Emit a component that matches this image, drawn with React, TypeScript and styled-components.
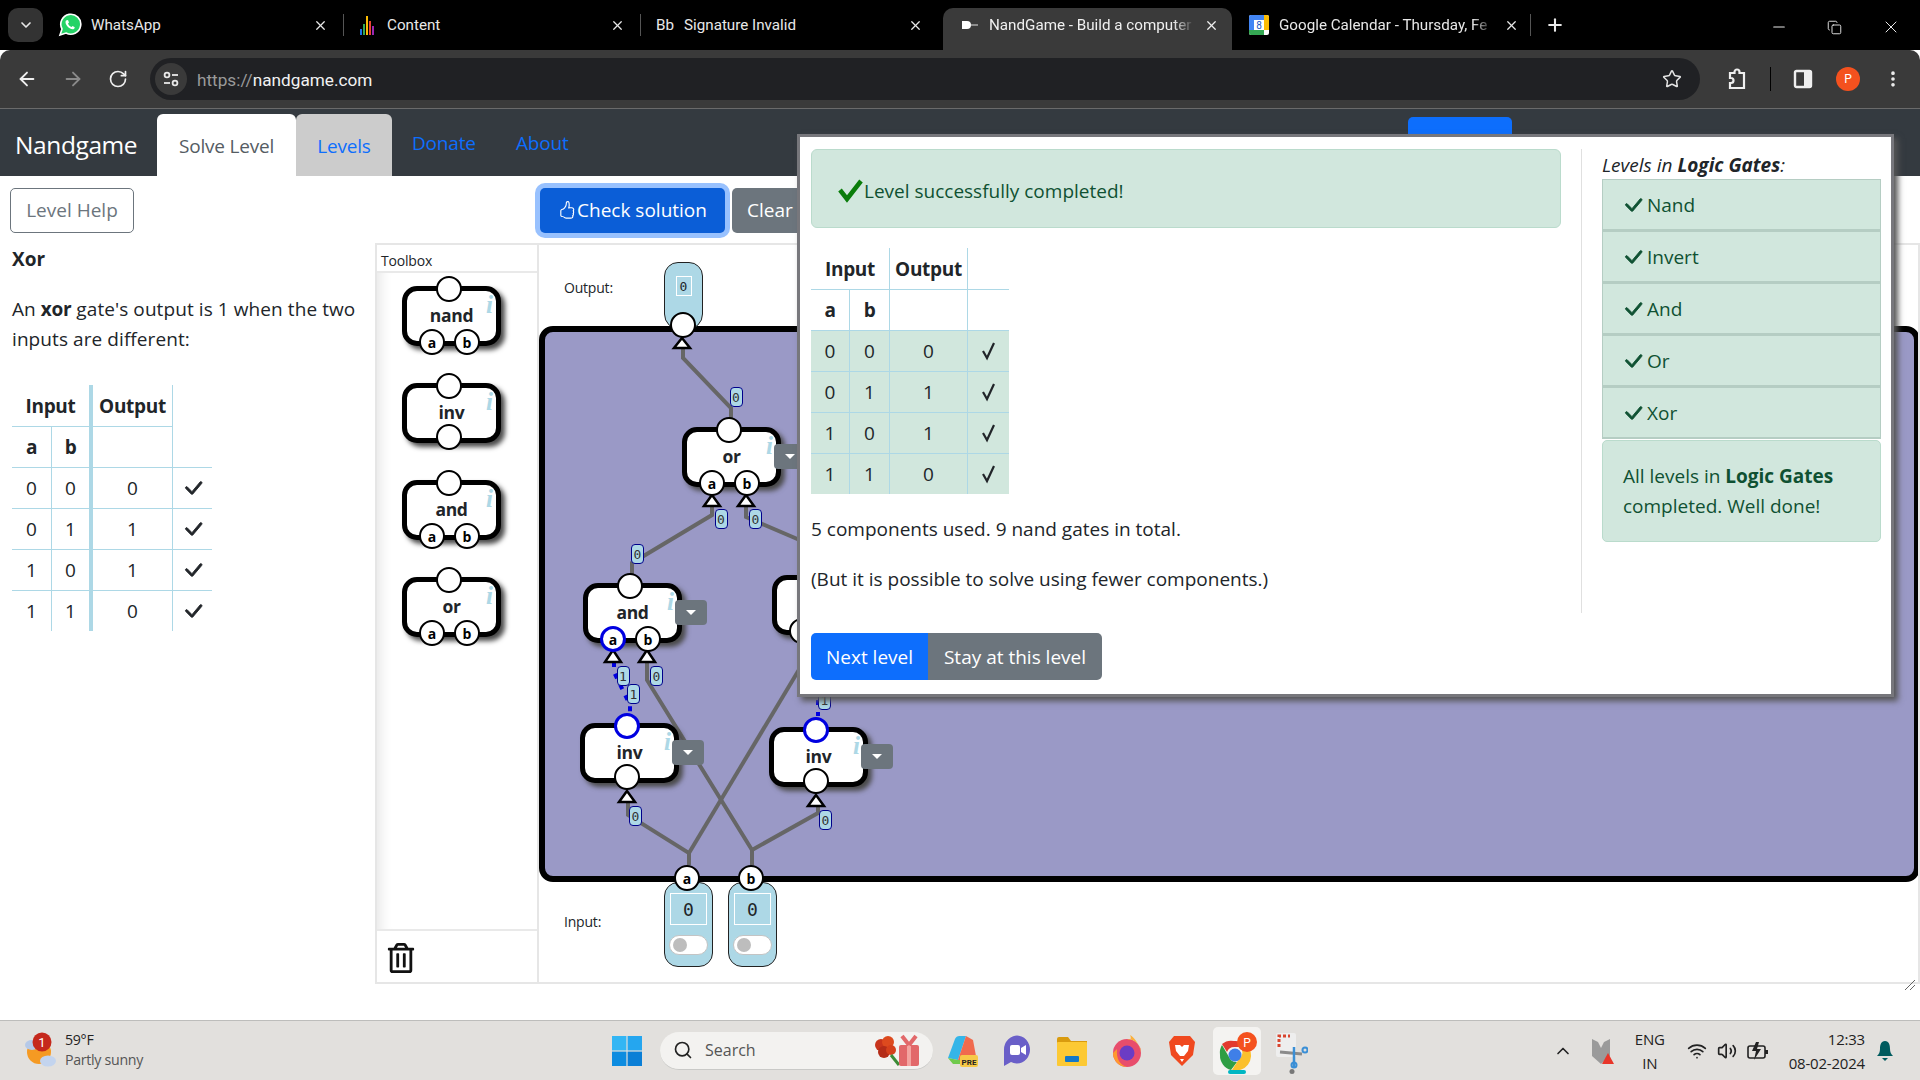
import styled, { createGlobalStyle } from "styled-components";
import { ReactNode } from "react";
import {
  ArrowLeft,
  ArrowRight,
  ChevronDown,
  ChevronUp,
  Copy,
  EllipsisVertical,
  Minus,
  Plus,
  RotateCw,
  Search,
  Star,
  Volume2,
  Wifi,
  X,
} from "lucide-react";
import { BsCheckLg, BsHandThumbsUp } from "react-icons/bs";
import { FaRegTrashAlt } from "react-icons/fa";

const SANS = `"Open Sans", "Noto Sans", sans-serif`;
const MONO = `"DejaVu Sans Mono", "Liberation Mono", monospace`;

// canvas origin in page pixels, the diagram data below is in page pixels
const OX = 539;
const OY = 245;

const GlobalStyle = createGlobalStyle`
  * { box-sizing: border-box; }
  html, body { margin: 0; padding: 0; overflow: hidden; background: #fff; }
  body { font-family: ${SANS}; color: #212529; }
`;

const Screen = styled.div`
  position: relative;
  width: 1920px;
  height: 1080px;
  display: flex;
  flex-direction: column;
  overflow: hidden;
`;

/* browser chrome */

const TabStrip = styled.div`
  height: 50px;
  flex: none;
  background: #000;
  display: flex;
  align-items: flex-end;
  padding-left: 8px;
  font-family: Roboto, sans-serif;
  font-size: 15.2px;
  color: #e8e8e8;
`;

const TabMenu = styled.div`
  width: 35px;
  height: 34px;
  margin-bottom: 8px;
  margin-right: 7px;
  border-radius: 10px;
  background: #333;
  display: flex;
  align-items: center;
  justify-content: center;
`;

const Tab = styled.div<{ $w: number; $pl: number; $pr: number; $gap?: number; $active?: boolean; $sep?: boolean }>`
  position: relative;
  width: ${(p) => p.$w}px;
  height: 42px;
  padding: 0 ${(p) => p.$pr}px 8px ${(p) => p.$pl}px;
  display: flex;
  align-items: center;
  gap: ${(p) => p.$gap || 10}px;
  border-radius: 10px 10px 0 0;
  background: ${(p) => (p.$active ? "#3a3a3a" : "transparent")};
  color: ${(p) => (p.$active ? "#f0f0f0" : "#e8e8e8")};
  white-space: nowrap;

  &::after {
    content: "";
    display: ${(p) => (p.$sep ? "block" : "none")};
    position: absolute;
    right: 0;
    top: 6px;
    height: 22px;
    width: 1px;
    background: #555;
  }
`;

const TabTitle = styled.span<{ $fade?: boolean }>`
  flex: 1;
  overflow: hidden;
  white-space: nowrap;
  mask-image: ${(p) => (p.$fade ? "linear-gradient(to right, #000 90%, transparent)" : "none")};
`;

const TabClose = styled(X)`
  flex: none;
`;

const NewTab = styled.div`
  margin: 0 0 13px 14px;
  height: 24px;
  display: flex;
  align-items: center;
`;

const WindowButtons = styled.div`
  margin-left: auto;
  margin-bottom: 13px;
  padding-right: 19px;
  display: flex;
  gap: 39px;
  align-items: center;
`;

const Toolbar = styled.div`
  height: 59px;
  flex: none;
  background: #3a3a3a;
  border-bottom: 1px solid #6a6a6a;
  border-radius: 10px 10px 0 0;
  display: flex;
  align-items: center;
  padding-left: 16px;
`;

const NavIcons = styled.div`
  width: 134px;
  display: flex;
  gap: 24px;
  align-items: center;
`;

const UrlBar = styled.div`
  width: 1550px;
  height: 42px;
  background: #202124;
  border-radius: 21px;
  display: flex;
  align-items: center;
  padding: 0 18px 0 5px;
  font-family: Roboto, sans-serif;
  font-size: 17.2px;
`;

const SiteIcon = styled.div`
  width: 32px;
  height: 32px;
  border-radius: 50%;
  background: #3a3a3a;
  display: flex;
  align-items: center;
  justify-content: center;
  margin-right: 10px;
`;

const UrlScheme = styled.span`
  color: #9a9a9a;
  padding-top: 1px;
`;

const UrlHost = styled.span`
  color: #f2f2f2;
  padding-top: 1px;
`;

const UrlStar = styled(Star)`
  margin-left: auto;
`;

const ToolIcons = styled.div`
  flex: 1;
  display: flex;
  align-items: center;
  padding-left: 25px;
`;

const ToolSep = styled.div`
  width: 1px;
  height: 24px;
  background: #000;
  margin: 0 22px 0 21px;
`;

const Avatar = styled.div`
  width: 24px;
  height: 24px;
  margin: 0 23px 0 23px;
  border-radius: 50%;
  background: #f4511e;
  color: #fff;
  font-size: 12px;
  display: flex;
  align-items: center;
  justify-content: center;
  font-family: Roboto, sans-serif;
`;

/* page nav */

const Navbar = styled.div`
  height: 67px;
  flex: none;
  background: #343a40;
  display: flex;
  align-items: flex-end;
  padding-left: 15px;
`;

const Brand = styled.div`
  width: 142px;
  align-self: center;
  margin-top: 3px;
  color: #fff;
  font-size: 24.5px;
  letter-spacing: -0.4px;
`;

const NavTab = styled.div<{ $bg: string; $color: string; $w: number }>`
  width: ${(p) => p.$w}px;
  height: 62px;
  background: ${(p) => p.$bg};
  color: ${(p) => p.$color};
  border-radius: 6px 6px 0 0;
  font-size: 19px;
  letter-spacing: -0.2px;
  display: flex;
  align-items: center;
  justify-content: center;
  padding-top: 1px;
`;

const NavLink = styled.div<{ $w: number }>`
  width: ${(p) => p.$w}px;
  height: 62px;
  color: #0d6efd;
  font-size: 19px;
  letter-spacing: -0.2px;
  display: flex;
  align-items: center;
  padding: 0 0 4px 20px;
`;

const NavPrimary = styled.div`
  width: 104px;
  height: 40px;
  margin: 8px 0 0 812px;
  align-self: flex-start;
  background: #0d6efd;
  border-radius: 5px 5px 0 0;
`;

/* page main */

const Main = styled.div`
  flex: 1;
  min-height: 0;
  display: flex;
  flex-direction: column;
  padding-top: 12px;
  background: #fff;
  font-size: 19px;
`;

const ActionRow = styled.div`
  display: flex;
  height: 45px;
  padding-left: 10px;
`;

const Button = styled.div<{ $bg: string; $w: number; $color?: string }>`
  width: ${(p) => p.$w}px;
  height: 100%;
  flex: none;
  display: flex;
  align-items: center;
  justify-content: center;
  padding-bottom: 2px;
  background: ${(p) => p.$bg};
  color: ${(p) => p.$color || "#fff"};
  border-radius: 5px;
`;

const HelpButton = styled(Button)`
  border: 1px solid #6c757d;
`;

const CheckButton = styled(Button)`
  margin-left: 406px;
  box-shadow: 0 0 0 5px #98c1fe;
  gap: 1px;
`;

const ClearButton = styled(Button)`
  margin-left: 7px;
  justify-content: flex-start;
  padding-left: 15px;
`;

const WorkRow = styled.div`
  display: flex;
  margin-top: 10px;
  height: 741px;
`;

const Lesson = styled.div`
  width: 375px;
  flex: none;
  padding: 2px 0 0 12px;
`;

const LessonTitle = styled.div`
  font-weight: 700;
  height: 28px;
  line-height: 28px;
`;

const LessonText = styled.p`
  margin: 21px 0 0;
  line-height: 30px;
  width: 352px;
  letter-spacing: 0.08px;

  b {
    letter-spacing: -0.3px;
  }
`;

const TruthGrid = styled.div<{ $thick?: boolean; $mt: number }>`
  display: grid;
  grid-template-columns: ${(p) => (p.$thick ? "40px 41px 80px 39px" : "39px 40px 78px 41px")};
  grid-auto-rows: 41px;
  margin-top: ${(p) => p.$mt}px;
  width: max-content;
`;

const TruthCell = styled.div<{ $span?: number; $bold?: boolean; $right?: number; $top?: boolean; $fill?: boolean }>`
  grid-column: span ${(p) => p.$span || 1};
  display: flex;
  align-items: center;
  justify-content: center;
  font-weight: ${(p) => (p.$bold ? 700 : 400)};
  letter-spacing: ${(p) => (p.$bold ? "-0.3px" : "0")};
  border-right: ${(p) => p.$right || 0}px solid #add8e6;
  border-top: ${(p) => (p.$top ? "1px solid #add8e6" : "none")};
  background: ${(p) => (p.$fill ? "#d1e7dd" : "transparent")};
`;

/* diagram */

const DiagramArea = styled.div`
  flex: 1;
  display: flex;
  border: 2px solid #e6e6e6;
  position: relative;
`;

const ResizeGrip = styled.svg`
  position: absolute;
  right: 2px;
  bottom: -9px;
  z-index: 4;
`;

const Toolbox = styled.div`
  width: 162px;
  flex: none;
  display: flex;
  flex-direction: column;
  border-right: 2px solid #e6e6e6;
`;

const ToolboxHead = styled.div`
  height: 28px;
  padding: 6px 0 0 4px;
  font-size: 14px;
  line-height: 20px;
  letter-spacing: -0.2px;
  border-bottom: 2px solid #e9e9e9;
`;

const ToolboxBody = styled.div`
  flex: 1;
  padding: 13px 0 0 25px;
  display: flex;
  flex-direction: column;
  gap: 37px;
  box-shadow: inset 14px 0 12px -10px #e8e8e8;
`;

const TrashRow = styled.div`
  height: 53px;
  border-top: 2px solid #e9e9e9;
  padding: 12px 0 0 9px;
  color: #111;
`;

const Canvas = styled.div`
  flex: 1;
  position: relative;
  overflow: hidden;
`;

const Board = styled.div`
  position: absolute;
  left: 0;
  top: ${326 - OY}px;
  width: ${1920 - OX}px;
  height: 556px;
  background: #9a99c6;
  border: 6px solid #000;
  border-radius: 14px;
`;

const WireLayer = styled.svg`
  position: absolute;
  left: 0;
  top: 0;
  z-index: 1;
`;

const GateBox = styled.div`
  position: relative;
  width: 99px;
  height: 60px;
  flex: none;
  background: #fff;
  border: 5px solid #000;
  border-radius: 15px;
  box-shadow: 4px 4px 5px #4a4a4a;
  z-index: 2;
`;

const PlacedGate = styled(GateBox)<{ $x: number; $y: number }>`
  position: absolute;
  left: ${(p) => p.$x - OX}px;
  top: ${(p) => p.$y - OY}px;
`;

const GateLabel = styled.div`
  height: 100%;
  display: flex;
  align-items: center;
  justify-content: center;
  padding-bottom: 2px;
  font-size: 17.5px;
  font-weight: 700;
  letter-spacing: -0.3px;
`;

const GateInfo = styled.span`
  position: absolute;
  right: 3px;
  top: 1px;
  font-family: "Liberation Serif", serif;
  font-style: italic;
  font-weight: 700;
  font-size: 25px;
  line-height: 26px;
  color: #add8e6;
`;

const Pin = styled.div<{ $l: number; $t: number; $on?: boolean }>`
  position: absolute;
  left: ${(p) => p.$l}px;
  top: ${(p) => p.$t}px;
  width: 26px;
  height: 26px;
  border-radius: 50%;
  background: #fff;
  border: ${(p) => (p.$on ? "3px solid #0000e0" : "2.5px solid #000")};
  display: flex;
  align-items: center;
  justify-content: center;
  font-size: 14px;
  font-weight: 700;
  color: #000;
  z-index: 1;
`;

const GateMenu = styled.div`
  position: absolute;
  left: 87px;
  top: 12px;
  width: 32px;
  height: 25px;
  background: #6c757d;
  border-radius: 4px;
  display: flex;
  align-items: center;
  justify-content: center;
  z-index: 2;

  &::after {
    content: "";
    border-left: 5px solid transparent;
    border-right: 5px solid transparent;
    border-top: 5px solid #fff;
  }
`;

const WireBadge = styled.div<{ $x: number; $y: number }>`
  position: absolute;
  left: ${(p) => p.$x - OX - 6}px;
  top: ${(p) => p.$y - OY - 10}px;
  width: 13px;
  height: 20px;
  background: #add8e6;
  border: 1px solid #00008b;
  border-radius: 4px;
  font-family: ${MONO};
  font-size: 13px;
  color: #333;
  display: flex;
  align-items: center;
  justify-content: center;
  z-index: 3;
`;

const CanvasLabel = styled.div<{ $x: number; $y: number }>`
  position: absolute;
  left: ${(p) => p.$x - OX}px;
  top: ${(p) => p.$y - OY - 10}px;
  font-size: 14px;
  line-height: 20px;
  letter-spacing: -0.2px;
`;

const OutputPill = styled.div`
  position: absolute;
  left: ${664 - OX}px;
  top: ${262 - OY}px;
  width: 39px;
  height: 68px;
  background: #add8e6;
  border: 1px solid #222;
  border-radius: 14px 14px 16px 16px;
  display: flex;
  justify-content: center;
  padding-top: 13px;
  z-index: 2;
`;

const OutputValue = styled.div`
  width: 16px;
  height: 20px;
  border: 1px solid #fff;
  font-family: ${MONO};
  font-size: 13px;
  display: flex;
  align-items: center;
  justify-content: center;
`;

const InputPill = styled.div<{ $x: number }>`
  position: absolute;
  left: ${(p) => p.$x - OX}px;
  top: ${882 - OY}px;
  width: 49px;
  height: 85px;
  background: #add8e6;
  border: 1px solid #222;
  border-radius: 14px;
  display: flex;
  flex-direction: column;
  align-items: center;
  padding-top: 10px;
  z-index: 2;
`;

const InputValue = styled.div`
  width: 37px;
  height: 32px;
  border: 1px solid #fff;
  font-family: ${MONO};
  font-size: 18px;
  display: flex;
  align-items: center;
  justify-content: center;
`;

const InputToggle = styled.div`
  width: 39px;
  height: 20px;
  margin-top: 10px;
  background: #fff;
  border: 1px solid #c4c4c4;
  border-radius: 10px;
  padding: 2px 0 0 3px;

  &::after {
    content: "";
    display: block;
    width: 14px;
    height: 14px;
    border-radius: 50%;
    background: #bdbdbd;
  }
`;

/* modal */

const Modal = styled.div`
  position: absolute;
  left: 797px;
  top: 134px;
  width: 1097px;
  height: 563px;
  background: #fff;
  border: 3px solid #77777c;
  box-shadow: 4px 4px 6px #555;
  display: flex;
  padding: 12px 0 0 11px;
  font-size: 19px;
  z-index: 10;
`;

const ModalMain = styled.div`
  width: 750px;
  flex: none;
`;

const SuccessAlert = styled.div`
  height: 79px;
  background: #d1e7dd;
  border: 1px solid #badbcc;
  border-radius: 6px;
  color: #0f5132;
  display: flex;
  align-items: center;
  padding: 4px 0 0 26px;
`;

const ModalText = styled.p<{ $mt: number }>`
  margin: ${(p) => p.$mt}px 0 0;
  line-height: 30px;
`;

const ButtonRow = styled.div`
  display: flex;
  height: 47px;
  margin-top: 39px;
`;

const JoinButton = styled(Button)<{ $first?: boolean }>`
  border-radius: ${(p) => (p.$first ? "5px 0 0 5px" : "0 5px 5px 0")};
  padding-bottom: 0;
`;

const ModalSide = styled.div`
  margin-left: 20px;
  width: 301px;
  height: 464px;
  border-left: 1px solid #e0e0e0;
  padding-left: 20px;
`;

const SideTitle = styled.div`
  font-style: italic;
  height: 30px;
  line-height: 32px;
`;

const LevelRow = styled.div`
  height: 52px;
  width: 279px;
  background: #d1e7dd;
  border: 1px solid #b5cdc3;
  border-bottom-width: 2px;
  color: #0f5132;
  display: flex;
  align-items: center;
  gap: 2px;
  padding: 0 0 0 18px;
`;

const SideAlert = styled.div`
  width: 279px;
  height: 102px;
  margin-top: 1px;
  background: #d1e7dd;
  border: 1px solid #badbcc;
  border-radius: 5px;
  color: #0f5132;
  padding: 20px 0 0 20px;
  line-height: 30px;
`;

/* taskbar */

const Taskbar = styled.div`
  height: 60px;
  flex: none;
  background: #e2e0dd;
  border-top: 1px solid #bdbdbb;
  display: flex;
  align-items: center;
  font-family: ${SANS};
`;

const Weather = styled.div`
  width: 612px;
  flex: none;
  display: flex;
  align-items: center;
  padding-left: 22px;
  gap: 3px;
`;

const WeatherText = styled.div`
  font-size: 14.2px;
  line-height: 20px;
  margin-top: -2px;
  letter-spacing: -0.3px;
  color: #222;
`;

const WeatherSub = styled.div`
  color: #555;
`;

const SearchBox = styled.div`
  width: 273px;
  height: 38px;
  margin: 0 -2px 0 18px;
  flex: none;
  background: #f3f2f0;
  border-radius: 19px;
  border-bottom: 1px solid #c9c9c7;
  display: flex;
  align-items: center;
  padding: 0 8px 0 13px;
  gap: 12px;
  font-size: 16px;
  color: #555;
`;

const SearchFlair = styled.svg`
  margin-left: auto;
`;

const AppSlot = styled.div<{ $active?: boolean }>`
  position: relative;
  width: 48px;
  height: 48px;
  margin-left: 7px;
  flex: none;
  display: flex;
  align-items: center;
  justify-content: center;
  border-radius: 5px;
  background: ${(p) => (p.$active ? "#f4f3f1" : "transparent")};
`;

const AppMark = styled.div<{ $active?: boolean }>`
  position: absolute;
  bottom: 1px;
  left: 50%;
  transform: translateX(-50%);
  width: ${(p) => (p.$active ? "18px" : "5px")};
  height: ${(p) => (p.$active ? "4px" : "5px")};
  border-radius: 3px;
  background: ${(p) => (p.$active ? "#00b7c3" : "#777")};
`;

const Tray = styled.div`
  margin-left: auto;
  display: flex;
  align-items: center;
  padding-right: 26px;
  color: #222;
  font-size: 15px;
  letter-spacing: -0.2px;
`;

const TrayCaret = styled(ChevronUp)`
  margin-right: 16px;
`;

const TrayLang = styled.div`
  margin: 0 22px 0 18px;
  line-height: 24px;
  text-align: center;
`;

const TrayIcons = styled.div`
  display: flex;
  gap: 10px;
  align-items: center;
`;

const TrayClock = styled.div`
  margin: 0 11px 0 20px;
  text-align: right;
  line-height: 24px;
`;

function GreenTick() {
  return (
    <svg width="26" height="24" viewBox="0 0 26 24">
      <path d="M2 11 L9 20 L23 2" fill="none" stroke="#0a7d0a" strokeWidth="4.5" />
    </svg>
  );
}

function ThinTick() {
  return (
    <svg width="16" height="20" viewBox="0 0 16 20">
      <path d="M2 10 L6 17 L13 2" fill="none" stroke="#212529" strokeWidth="2.2" />
    </svg>
  );
}

interface ITable {
  rows: number[][];
  thick?: boolean;
  fill?: boolean;
  mt: number;
  tick: ReactNode;
}

function TruthTable(props: ITable) {
  const { rows, thick, fill, mt, tick } = props;
  const mid = thick ? 4 : 1;
  return (
    <TruthGrid $thick={thick} $mt={mt}>
      <TruthCell $span={2} $bold $right={mid}>Input</TruthCell>
      <TruthCell $bold $right={1}>Output</TruthCell>
      <TruthCell />
      <TruthCell $bold $right={1} $top>a</TruthCell>
      <TruthCell $bold $right={mid} $top>b</TruthCell>
      <TruthCell $right={1} $top />
      <TruthCell $top={!thick} />
      {rows.flatMap((r, i) => [
        <TruthCell key={`a${i}`} $right={1} $top $fill={fill}>{r[0]}</TruthCell>,
        <TruthCell key={`b${i}`} $right={mid} $top $fill={fill}>{r[1]}</TruthCell>,
        <TruthCell key={`o${i}`} $right={1} $top $fill={fill}>{r[2]}</TruthCell>,
        <TruthCell key={`t${i}`} $top $fill={fill}>{tick}</TruthCell>,
      ])}
    </TruthGrid>
  );
}

type GateKind = "two" | "inv";

function GateInner(props: { name: string; kind: GateKind; onTop?: boolean; onA?: boolean; menu?: boolean }) {
  return (
    <>
      <GateLabel>{props.name}</GateLabel>
      <GateInfo>i</GateInfo>
      <Pin $l={29} $t={-15} $on={props.onTop} />
      {props.kind === "two" ? (
        <>
          <Pin $l={12} $t={38} $on={props.onA}>a</Pin>
          <Pin $l={47} $t={38}>b</Pin>
        </>
      ) : (
        <Pin $l={29} $t={36} />
      )}
      {props.menu && <GateMenu />}
    </>
  );
}

const WIRES = [
  "M683 348 V358 L731 408 V418",
  "M712 505 V515 L632 563 V574",
  "M746 505 V517 L830 553",
  "M647 662 V680 L752 850 V865",
  "M628 801 V815 L689 853 V865",
  "M689 853 L800 668",
  "M752 850 L818 813 V801",
];

const LIVE_WIRES = ["M614 662 V672 L630 705 V712", "M818 700 V716"];

const ARROWS = [
  [682, 338, 348],
  [712, 495, 506],
  [746, 495, 506],
  [613, 650, 662],
  [647, 650, 662],
  [627, 791, 802],
  [816, 795, 806],
];

const BADGES: [number, number, string][] = [
  [735.5, 397, "0"],
  [720.5, 519, "0"],
  [755, 519, "0"],
  [637, 554, "0"],
  [622.5, 676, "1"],
  [633, 694, "1"],
  [656, 676, "0"],
  [635, 816, "0"],
  [825, 820, "0"],
  [824, 700, "1"],
];

const TRUTH = [
  [0, 0, 0],
  [0, 1, 1],
  [1, 0, 1],
  [1, 1, 0],
];

const LEVELS = ["Nand", "Invert", "And", "Or", "Xor"];

function Diagram() {
  return (
    <Canvas>
      <Board />
      <WireLayer width={1381} height={737} viewBox={`${OX} ${OY} 1381 737`}>
        {WIRES.map((d) => (
          <path key={d} d={d} fill="none" stroke="#666" strokeWidth="4" />
        ))}
        {LIVE_WIRES.map((d) => (
          <path key={d} d={d} fill="none" stroke="#0000e0" strokeWidth="4" strokeDasharray="5 7" />
        ))}
        {ARROWS.map(([x, a, b]) => (
          <polygon key={`${x}-${a}`} points={`${x},${a} ${x + 8},${b} ${x - 8},${b}`} fill="#fff" stroke="#000" strokeWidth="2.5" />
        ))}
      </WireLayer>

      <CanvasLabel $x={564} $y={288}>Output:</CanvasLabel>
      <OutputPill>
        <OutputValue>0</OutputValue>
        <Pin $l={5} $t={49} />
      </OutputPill>

      <PlacedGate $x={682} $y={427}><GateInner name="or" kind="two" menu /></PlacedGate>
      <PlacedGate $x={583} $y={583}><GateInner name="and" kind="two" menu onA /></PlacedGate>
      <PlacedGate $x={772} $y={575}><GateInner name="or" kind="two" /></PlacedGate>
      <PlacedGate $x={580} $y={723}><GateInner name="inv" kind="inv" menu onTop /></PlacedGate>
      <PlacedGate $x={769} $y={727}><GateInner name="inv" kind="inv" menu onTop /></PlacedGate>

      {BADGES.map(([x, y, v]) => (
        <WireBadge key={`${x}-${y}`} $x={x} $y={y}>{v}</WireBadge>
      ))}

      <CanvasLabel $x={564} $y={922}>Input:</CanvasLabel>
      <InputPill $x={664}>
        <Pin $l={9} $t={-18}>a</Pin>
        <InputValue>0</InputValue>
        <InputToggle />
      </InputPill>
      <InputPill $x={728}>
        <Pin $l={9} $t={-18}>b</Pin>
        <InputValue>0</InputValue>
        <InputToggle />
      </InputPill>
    </Canvas>
  );
}

function WhatsAppIcon() {
  return (
    <svg width="24" height="24" viewBox="0 0 24 24">
      <path d="M2 22 L4 16 A10 10 0 1 1 8 20 Z" fill="#25d366" stroke="#fff" strokeWidth="1.6" />
      <path d="M8 7.5 C7 9 7.5 11 9.5 13.5 C12 16 14.5 17 16.2 15.8 L16.8 14.2 L14.6 13 L13.6 14 C12 13.4 10.6 12 10 10.4 L11 9.4 L10 7 Z" fill="#fff" />
    </svg>
  );
}

function BarsIcon() {
  return (
    <svg width="18" height="20" viewBox="0 0 18 20">
      <rect x="1" y="14" width="2" height="6" fill="#1a73e8" />
      <rect x="4" y="9" width="2" height="11" fill="#34a853" />
      <rect x="7" y="1" width="2" height="19" fill="#fbbc04" />
      <rect x="10" y="6" width="2" height="14" fill="#ea4335" />
      <rect x="13" y="11" width="2" height="9" fill="#9c27b0" />
    </svg>
  );
}

function NandFavicon() {
  return (
    <svg width="18" height="12" viewBox="0 0 18 12">
      <path d="M1 2 H6 A4 4 0 0 1 6 10 H1 Z" fill="#fff" />
      <path d="M10 6 H17" stroke="#aaa" strokeWidth="1.5" />
    </svg>
  );
}

function CalendarIcon() {
  return (
    <svg width="20" height="20" viewBox="0 0 20 20">
      <rect width="20" height="20" rx="2" fill="#fff" />
      <path d="M0 5 V2 A2 2 0 0 1 2 0 H15 V5 Z" fill="#4285f4" />
      <path d="M15 0 H18 A2 2 0 0 1 20 2 V15 H15 Z" fill="#fbbc04" />
      <path d="M0 15 H15 V20 H2 A2 2 0 0 1 0 18 Z" fill="#34a853" />
      <path d="M0 5 H5 V15 H0 Z" fill="#4285f4" />
      <rect x="5" y="5" width="10" height="10" fill="#fff" />
      <text x="10" y="14" fontSize="10" textAnchor="middle" fill="#1a56c4" fontFamily="Roboto, sans-serif">8</text>
    </svg>
  );
}

function TuneIcon() {
  return (
    <svg width="18" height="18" viewBox="0 0 18 18" fill="none" stroke="#e8e8e8" strokeWidth="1.8">
      <circle cx="5" cy="5" r="2.4" />
      <path d="M10 5 H16" />
      <path d="M2 13 H8" />
      <circle cx="13" cy="13" r="2.4" />
    </svg>
  );
}

function ExtensionIcon() {
  return (
    <svg width="24" height="24" viewBox="0 0 24 24" fill="none" stroke="#efefef" strokeWidth="2.2">
      <path d="M5 6 H9.5 V5 A2.5 2.5 0 0 1 14.5 5 V6 H19 V21 H5 V16 H6 A2.5 2.5 0 0 0 6 11 H5 Z" />
    </svg>
  );
}

function SidePanelIcon() {
  return (
    <svg width="20" height="20" viewBox="0 0 20 20">
      <rect x="2" y="2" width="16" height="16" rx="1.5" fill="none" stroke="#efefef" strokeWidth="2.4" />
      <rect x="11" y="2" width="7" height="16" fill="#efefef" />
    </svg>
  );
}

function WeatherIcon() {
  return (
    <svg width="40" height="40" viewBox="0 0 40 40">
      <circle cx="17" cy="21" r="12" fill="#f59a23" />
      <ellipse cx="10" cy="14" rx="7" ry="5" fill="#b5c9e8" />
      <ellipse cx="26" cy="30" rx="8" ry="5.5" fill="#c3d4ee" />
      <circle cx="20" cy="11" r="9.5" fill="#c5281c" />
      <text x="20" y="15.5" fontSize="13" textAnchor="middle" fill="#fff" fontFamily="Roboto, sans-serif">1</text>
    </svg>
  );
}

function WindowsLogo() {
  return (
    <svg width="30" height="30" viewBox="0 0 30 30">
      <rect x="0" y="0" width="14.4" height="14.4" fill="#33b6f4" />
      <rect x="15.6" y="0" width="14.4" height="14.4" fill="#25a6ef" />
      <rect x="0" y="15.6" width="14.4" height="14.4" fill="#0d8ce0" />
      <rect x="15.6" y="15.6" width="14.4" height="14.4" fill="#0b7fd6" />
    </svg>
  );
}

function GiftFlair() {
  return (
    <SearchFlair width="54" height="34" viewBox="0 0 54 34">
      <circle cx="10" cy="12" r="6" fill="#c8341c" />
      <circle cx="17" cy="9" r="6" fill="#dd4a1e" />
      <circle cx="13" cy="19" r="6" fill="#b42c18" />
      <circle cx="20" cy="17" r="5" fill="#d5401c" />
      <path d="M20 22 L28 32" stroke="#3d8b37" strokeWidth="3" />
      <rect x="28" y="12" width="20" height="21" rx="2" fill="#e2686a" />
      <rect x="36" y="12" width="4" height="21" fill="#f3a4a0" />
      <path d="M38 12 L31 3 M38 12 L45 3" stroke="#e2686a" strokeWidth="4" />
    </SearchFlair>
  );
}

function CopilotIcon() {
  return (
    <svg width="34" height="34" viewBox="0 0 34 34">
      <path d="M3 24 L10 5 A5 5 0 0 1 15 2 H21 L13 26 Z" fill="#35b5e8" />
      <path d="M13 26 L21 2 L28 6 L31 22 L22 28 Z" fill="#f06a4e" />
      <path d="M3 24 L13 26 L24 26 L22 30 H8 Z" fill="#6fca4b" />
      <rect x="15" y="21" width="18" height="12" rx="2" fill="#f7c948" />
      <text x="24" y="30.5" fontSize="8" fontWeight="700" textAnchor="middle" fill="#222" fontFamily="Roboto, sans-serif">PRE</text>
    </svg>
  );
}

function ChatIcon() {
  return (
    <svg width="30" height="32" viewBox="0 0 30 32">
      <path d="M2 15 A13 14 0 1 1 9 27 L2 31 Z" fill="#6a5fc8" />
      <rect x="8" y="10" width="10" height="10" rx="2" fill="#fff" />
      <path d="M19 13 L24 10 V20 L19 17 Z" fill="#fff" />
    </svg>
  );
}

function FolderIcon() {
  return (
    <svg width="32" height="30" viewBox="0 0 32 30">
      <path d="M1 3 A2 2 0 0 1 3 1 H12 L15 5 H31 V8 H1 Z" fill="#d99b0f" />
      <rect x="1" y="6" width="30" height="24" rx="1" fill="#fcc934" />
      <rect x="9" y="20" width="14" height="6" rx="1" fill="#1478c8" />
    </svg>
  );
}

function FirefoxIcon() {
  return (
    <svg width="30" height="32" viewBox="0 0 30 32">
      <circle cx="15" cy="18" r="14" fill="#e84d6c" />
      <path d="M15 4 A14 14 0 0 1 29 18 C28 10 22 2 18 0 C20 4 18 6 15 4 Z" fill="#fbb03b" />
      <path d="M1 18 A14 14 0 0 0 15 32 C8 30 4 24 5 14 Z" fill="#ff9a2e" />
      <circle cx="15" cy="18" r="7.5" fill="#6b3cc4" />
    </svg>
  );
}

function BraveIcon() {
  return (
    <svg width="28" height="32" viewBox="0 0 28 32">
      <path d="M6 1 H22 L27 7 L25 20 L14 31 L3 20 L1 7 Z" fill="#f0491f" />
      <path d="M7 10 L12 10 L14 12 L16 10 L21 10 L20 16 L16 21 H12 L8 16 Z" fill="#fff" />
      <path d="M12 24 H16 L14 27 Z" fill="#fff" />
    </svg>
  );
}

function ChromeIcon() {
  return (
    <svg width="40" height="40" viewBox="0 0 40 40">
      <path d="M17 10 A14 14 0 0 1 30 16 L18 16 A8 8 0 0 0 10 21 L5 13 A14 14 0 0 1 17 10" fill="#e23a2e" />
      <path d="M3 24 A15 15 0 0 1 5 14 L12 26 A8 8 0 0 0 20 31 L14 39 A15 15 0 0 1 3 24" fill="#2f9e44" />
      <path d="M32 17 A15 15 0 0 1 15 39 L22 28 A8 8 0 0 0 24 17 Z" fill="#fbc02d" />
      <circle cx="18" cy="24" r="6.5" fill="#3f7fe8" />
      <circle cx="30" cy="11" r="10" fill="#f4511e" />
      <text x="30" y="15.5" fontSize="12" textAnchor="middle" fill="#fff" fontFamily="Roboto, sans-serif">P</text>
    </svg>
  );
}

function SnipIcon() {
  return (
    <svg width="32" height="36" viewBox="0 0 32 36">
      <rect x="0" y="0" width="20" height="24" rx="2" fill="#eeeeee" />
      <path d="M3 14 V3 H14" fill="none" stroke="#d8452e" strokeWidth="3" strokeDasharray="3 2" />
      <path d="M4 19 L26 21" stroke="#8b8b8b" strokeWidth="3" />
      <path d="M18 14 V34" stroke="#3a8fd6" strokeWidth="2.5" />
      <circle cx="18" cy="32" r="2.5" fill="none" stroke="#3a8fd6" strokeWidth="2" />
      <circle cx="29" cy="17" r="2.5" fill="none" stroke="#3a8fd6" strokeWidth="2" />
    </svg>
  );
}

function ShieldIcon() {
  return (
    <svg width="28" height="30" viewBox="0 0 28 30">
      <path d="M3 3 L9 6 H15 L21 3 V20 L12 28 L3 20 Z" fill="#9a9a9a" />
      <path d="M9 6 L12 12 L15 6 Z" fill="#e2e0dd" />
      <path d="M19 17 L25 28 H13 Z" fill="#e8362a" />
    </svg>
  );
}

function BatteryIcon() {
  return (
    <svg width="22" height="22" viewBox="0 0 22 22">
      <rect x="1" y="6" width="17" height="12" rx="2" fill="none" stroke="#222" strokeWidth="1.6" />
      <rect x="18" y="10" width="3" height="4" fill="#222" />
      <path d="M9 2 L5 11 H9 L7 20 L14 9 H10 L12 2 Z" fill="#222" />
    </svg>
  );
}

function BellIcon() {
  return (
    <svg width="18" height="22" viewBox="0 0 18 22">
      <path d="M9 1 C5 1 4 5 4 9 C4 12 3 14 1 16 H17 C15 14 14 12 14 9 C14 5 13 1 9 1 Z" fill="#005b5e" />
      <path d="M6 18 H12 L9 21 Z" fill="#005b5e" />
    </svg>
  );
}

export default function App() {
  return (
    <Screen>
      <GlobalStyle />

      <TabStrip>
        <TabMenu>
          <ChevronDown size={16} color="#e8e8e8" strokeWidth={2.5} />
        </TabMenu>
        <Tab $w={294} $pl={8} $pr={16} $gap={9} $sep>
          <WhatsAppIcon />
          <TabTitle>WhatsApp</TabTitle>
          <TabClose size={15} />
        </Tab>
        <Tab $w={297} $pl={15} $pr={16} $sep>
          <BarsIcon />
          <TabTitle>Content</TabTitle>
          <TabClose size={15} />
        </Tab>
        <Tab $w={302} $pl={15} $pr={20}>
          <span>Bb</span>
          <TabTitle>Signature Invalid</TabTitle>
          <TabClose size={15} />
        </Tab>
        <Tab $w={289} $pl={18} $pr={13} $active>
          <NandFavicon />
          <TabTitle $fade>NandGame - Build a computer f</TabTitle>
          <TabClose size={15} />
        </Tab>
        <Tab $w={299} $pl={17} $pr={12} $sep>
          <CalendarIcon />
          <TabTitle $fade>Google Calendar - Thursday, Fe</TabTitle>
          <TabClose size={15} />
        </Tab>
        <NewTab>
          <Plus size={20} strokeWidth={2.5} />
        </NewTab>
        <WindowButtons>
          <Minus size={18} strokeWidth={1.5} />
          <Copy size={15} strokeWidth={1.5} />
          <X size={20} strokeWidth={1.2} />
        </WindowButtons>
      </TabStrip>

      <Toolbar>
        <NavIcons>
          <ArrowLeft size={22} color="#efefef" strokeWidth={2} />
          <ArrowRight size={22} color="#8a8a8a" strokeWidth={2} />
          <RotateCw size={20} color="#efefef" strokeWidth={2} />
        </NavIcons>
        <UrlBar>
          <SiteIcon>
            <TuneIcon />
          </SiteIcon>
          <UrlScheme>https://</UrlScheme>
          <UrlHost>nandgame.com</UrlHost>
          <UrlStar size={20} color="#e3e3e3" strokeWidth={1.8} />
        </UrlBar>
        <ToolIcons>
          <ExtensionIcon />
          <ToolSep />
          <SidePanelIcon />
          <Avatar>P</Avatar>
          <EllipsisVertical size={20} color="#efefef" strokeWidth={2.4} />
        </ToolIcons>
      </Toolbar>

      <Navbar>
        <Brand>Nandgame</Brand>
        <NavTab $bg="#fff" $color="#555c63" $w={139}>Solve Level</NavTab>
        <NavTab $bg="#ccc" $color="#0d6efd" $w={96}>Levels</NavTab>
        <NavLink $w={104}>Donate</NavLink>
        <NavLink $w={100}>About</NavLink>
        <NavPrimary />
      </Navbar>

      <Main>
        <ActionRow>
          <HelpButton $bg="#fff" $color="#6c757d" $w={124}>Level Help</HelpButton>
          <CheckButton $bg="#0b5ed7" $w={185}>
            <BsHandThumbsUp size={18} />
            Check solution
          </CheckButton>
          <ClearButton $bg="#6c757d" $w={100}>Clear</ClearButton>
        </ActionRow>
        <WorkRow>
          <Lesson>
            <LessonTitle>Xor</LessonTitle>
            <LessonText>
              An <b>xor</b> gate's output is 1 when the two inputs are different:
            </LessonText>
            <TruthTable rows={TRUTH} thick mt={31} tick={<BsCheckLg size={24} color="#212529" strokeWidth={0.6} />} />
          </Lesson>
          <DiagramArea>
            <Toolbox>
              <ToolboxHead>Toolbox</ToolboxHead>
              <ToolboxBody>
                <GateBox><GateInner name="nand" kind="two" /></GateBox>
                <GateBox><GateInner name="inv" kind="inv" /></GateBox>
                <GateBox><GateInner name="and" kind="two" /></GateBox>
                <GateBox><GateInner name="or" kind="two" /></GateBox>
              </ToolboxBody>
              <TrashRow>
                <FaRegTrashAlt size={30} />
              </TrashRow>
            </Toolbox>
            <Diagram />
            <ResizeGrip width="12" height="12" viewBox="0 0 12 12">
              <path d="M1 11 L11 1 M6 11 L11 6" stroke="#666" strokeWidth="1" />
            </ResizeGrip>
          </DiagramArea>
        </WorkRow>
      </Main>

      <Taskbar>
        <Weather>
          <WeatherIcon />
          <WeatherText>
            59°F
            <WeatherSub>Partly sunny</WeatherSub>
          </WeatherText>
        </Weather>
        <WindowsLogo />
        <SearchBox>
          <Search size={20} color="#222" strokeWidth={2} />
          Search
          <GiftFlair />
        </SearchBox>
        <AppSlot><CopilotIcon /></AppSlot>
        <AppSlot><ChatIcon /></AppSlot>
        <AppSlot><FolderIcon /></AppSlot>
        <AppSlot><FirefoxIcon /></AppSlot>
        <AppSlot><BraveIcon /></AppSlot>
        <AppSlot $active><ChromeIcon /><AppMark $active /></AppSlot>
        <AppSlot><SnipIcon /><AppMark /></AppSlot>
        <Tray>
          <TrayCaret size={20} />
          <ShieldIcon />
          <TrayLang>ENG<br />IN</TrayLang>
          <TrayIcons>
            <Wifi size={20} />
            <Volume2 size={20} />
            <BatteryIcon />
          </TrayIcons>
          <TrayClock>12:33<br />08-02-2024</TrayClock>
          <BellIcon />
        </Tray>
      </Taskbar>

      <Modal>
        <ModalMain>
          <SuccessAlert>
            <GreenTick />
            Level successfully completed!
          </SuccessAlert>
          <TruthTable rows={TRUTH} fill mt={20} tick={<ThinTick />} />
          <ModalText $mt={20}>5 components used. 9 nand gates in total.</ModalText>
          <ModalText $mt={20}>(But it is possible to solve using fewer components.)</ModalText>
          <ButtonRow>
            <JoinButton $bg="#0d6efd" $w={117} $first>Next level</JoinButton>
            <JoinButton $bg="#6c757d" $w={174}>Stay at this level</JoinButton>
          </ButtonRow>
        </ModalMain>
        <ModalSide>
          <SideTitle>
            Levels in <b>Logic Gates</b>:
          </SideTitle>
          {LEVELS.map((name) => (
            <LevelRow key={name}>
              <BsCheckLg size={24} color="#0f5132" strokeWidth={0.6} />
              {name}
            </LevelRow>
          ))}
          <SideAlert>
            All levels in <b>Logic Gates</b> completed. Well done!
          </SideAlert>
        </ModalSide>
      </Modal>
    </Screen>
  );
}
